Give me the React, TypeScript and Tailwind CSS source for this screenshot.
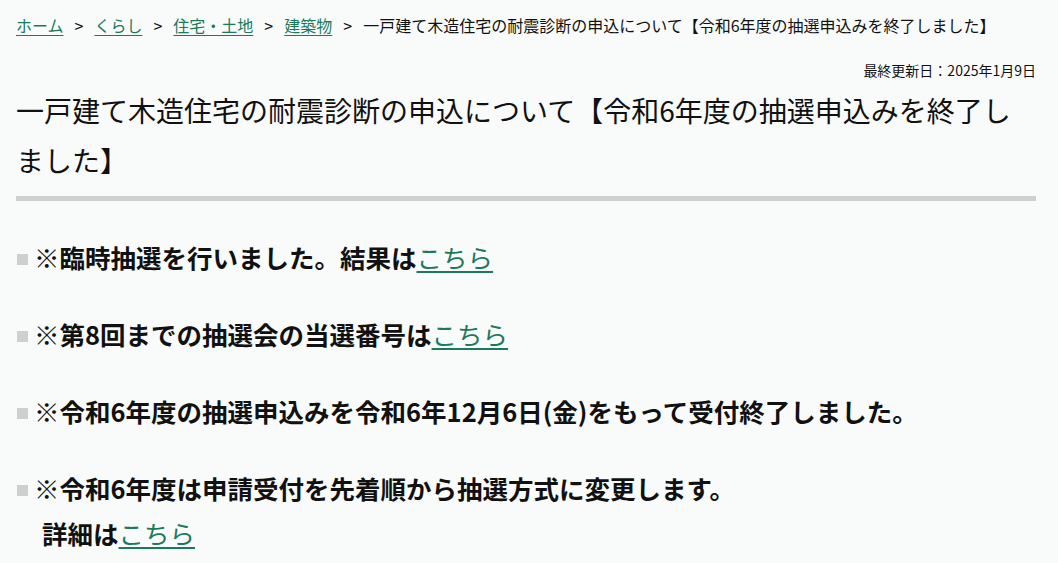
import React from "react";

const link = "text-[#1b7a5c] underline underline-offset-[3px] decoration-1";
const itemLink = "text-[#1b7a5c] underline underline-offset-[3px] decoration-2 font-normal";

function Bullet() {
  return <span className="inline-block w-[11px] h-[11px] bg-[#cfcfd2] mr-[6px] ml-px align-middle relative top-[-2px]" />;
}

export default function App() {
  return (
    <div
      className="min-h-[563px] bg-[#f9fbfb] text-[#111] pl-4 pr-[22px]"
      style={{ fontFamily: '"Noto Sans CJK JP", "Noto Sans", sans-serif' }}
    >
      <nav className="pt-[14px] text-[16px] leading-[22px] whitespace-nowrap">
        <a className={link} href="#">ホーム</a>
        <span className="mx-[11px]">&gt;</span>
        <a className={link} href="#">くらし</a>
        <span className="mx-[11px]">&gt;</span>
        <a className={link} href="#">住宅・土地</a>
        <span className="mx-[11px]">&gt;</span>
        <a className={link} href="#">建築物</a>
        <span className="mx-[11px]">&gt;</span>
        <span>一戸建て木造住宅の耐震診断の申込について【令和6年度の抽選申込みを終了しました】</span>
      </nav>
      <p className="mt-6 text-right text-[14px] leading-[20px]">最終更新日：2025年1月9日</p>
      <h1 className="mt-[5px] text-[28px] leading-[50px] font-normal pb-[11px] border-b-[5px] border-[#d0d0d2]">
        一戸建て木造住宅の耐震診断の申込について【令和6年度の抽選申込みを終了しました】
      </h1>
      <ul className="mt-[33px] text-[25.5px] leading-[45px] font-bold flex flex-col gap-[32px]">
        <li>
          <Bullet />※臨時抽選を行いました。結果は<a className={itemLink} href="#">こちら</a>
        </li>
        <li>
          <Bullet />※第8回までの抽選会の当選番号は<a className={itemLink} href="#">こちら</a>
        </li>
        <li>
          <Bullet />※令和6年度の抽選申込みを令和6年12月6日(金)をもって受付終了しました。
        </li>
        <li>
          <Bullet />※令和6年度は申請受付を先着順から抽選方式に変更します。
          <div className="pl-[26px]">
            詳細は<a className={itemLink} href="#">こちら</a>
          </div>
        </li>
      </ul>
    </div>
  );
}
